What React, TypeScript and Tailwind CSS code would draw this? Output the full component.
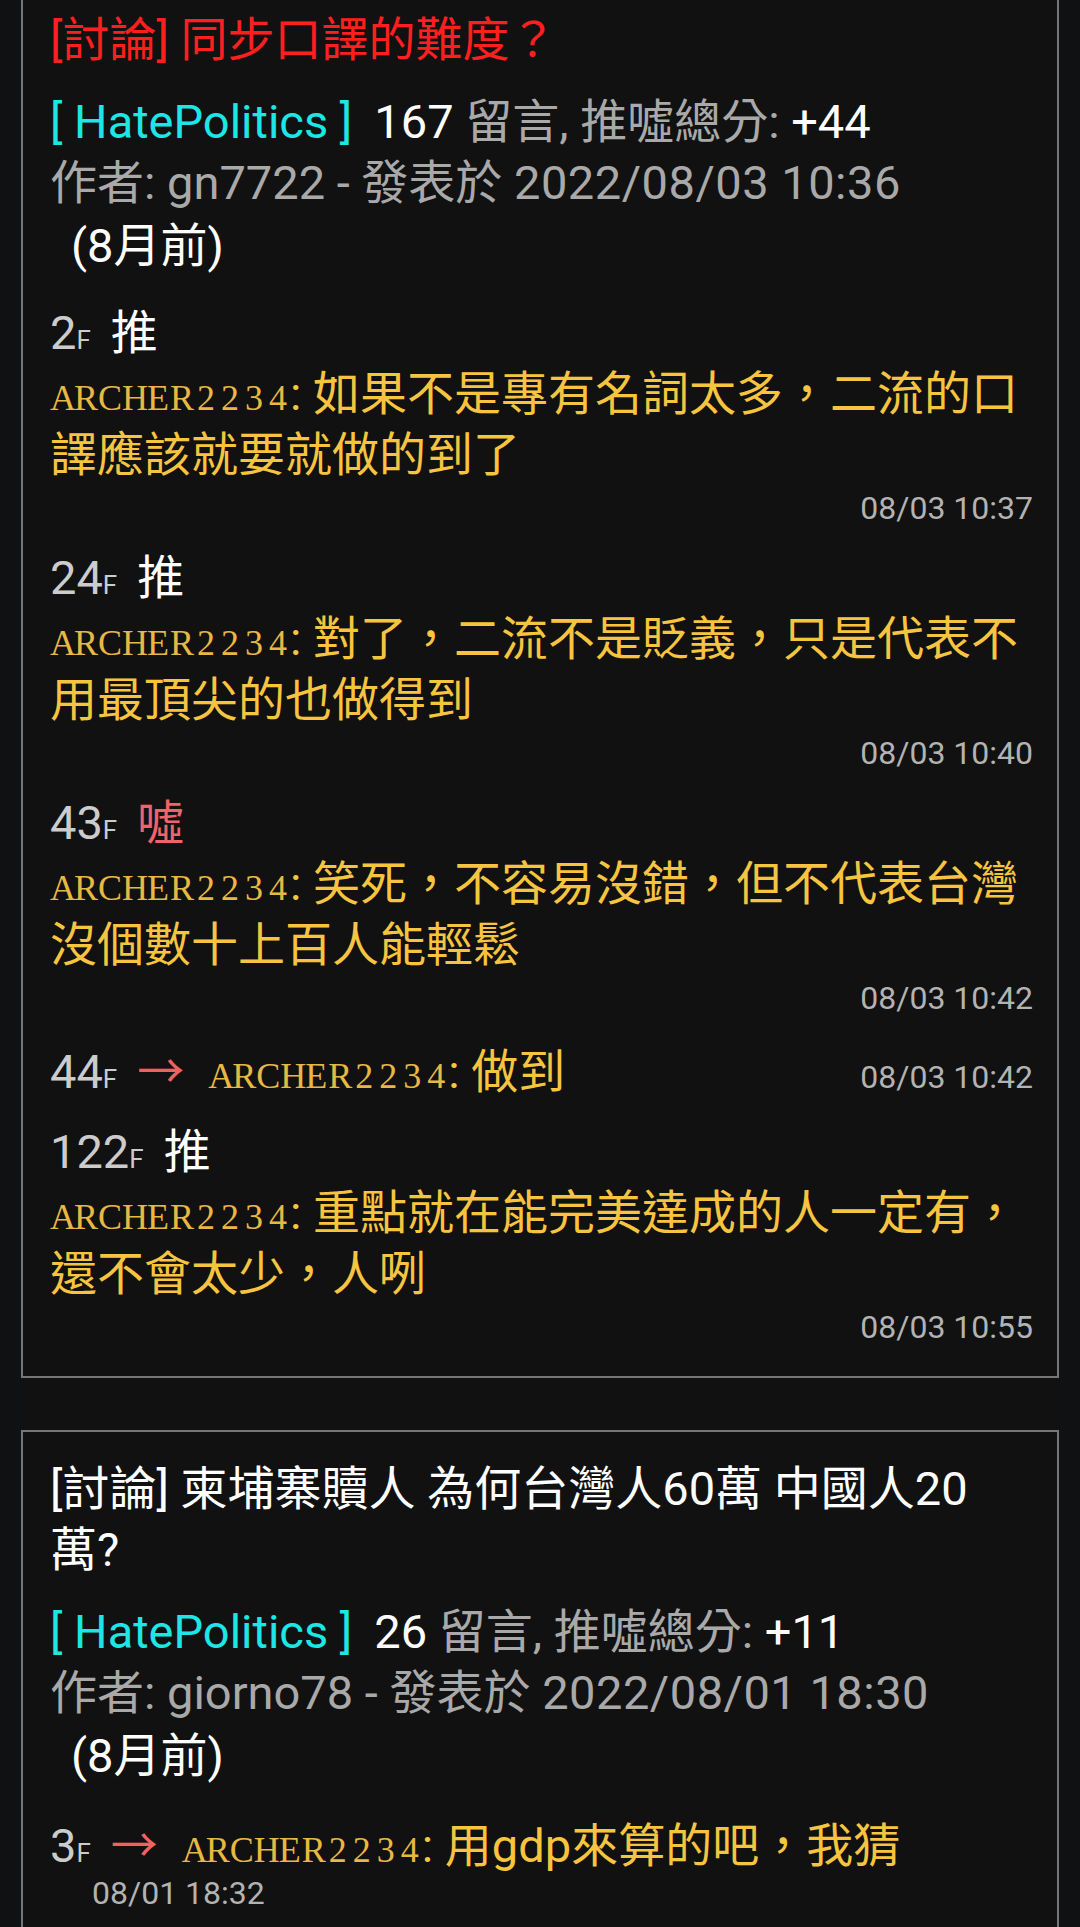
import { FC, ReactNode } from "react";

const Mono: FC<{ text: string }> = ({ text }) => (
	<span className="text-[#e8b844] font-['Liberation_Serif',serif] text-[36px] leading-[30px]">
		{text.split("").map((ch, i) => (
			<span key={i} className="inline-block w-[24px] text-center leading-[30px]">
				{ch}
			</span>
		))}
	</span>
);

const Floor: FC<{ n: string }> = ({ n }) => (
	<span className="text-[#cccccc]">
		{n}
		<span className="text-[26px] leading-[20px]">F</span>
	</span>
);

const Time: FC<{ children: ReactNode; className?: string }> = ({ children, className = "" }) => (
	<div className={`text-[32px] leading-[46px] text-[#b3b3b3] ${className}`}>{children}</div>
);

const PushComment: FC<{ floor: string; tag: string; lines: string[]; time: string; first?: boolean }> = ({
	floor,
	tag,
	lines,
	time,
	first,
}) => (
	<div className={first ? "" : "mt-[16px]"}>
		<div>
			<Floor n={floor} />
			<span className={`ml-[20px] ${tag === "噓" ? "text-[#f0626c]" : "text-white"}`}>{tag}</span>
		</div>
		<div className="text-[#f7c440]">
			<Mono text="ARCHER2234" />
			<span>: </span>
			{lines.map((l, i) => (
				<span key={i}>
					{i > 0 && <br />}
					{l}
				</span>
			))}
		</div>
		<Time className="text-right">{time}</Time>
	</div>
);

const ArrowHead: FC<{ floor: string; text: string }> = ({ floor, text }) => (
	<div className="whitespace-nowrap">
		<Floor n={floor} />
		<span className="ml-[20px] text-[#f06262]">→</span>
		<span className="ml-[24px]">
			<Mono text="ARCHER2234" />
		</span>
		<span className="text-[#f7c440]">: {text}</span>
	</div>
);

const Header: FC<{ title: ReactNode; titleColor: string; count: string; score: string; author: string; date: string }> = ({
	title,
	titleColor,
	count,
	score,
	author,
	date,
}) => (
	<>
		<div className={titleColor}>{title}</div>
		<div className="mt-[21px]">
			<span className="text-[#1de6e6]">[ HatePolitics ]</span>
			<span className="ml-[22px] text-white">{count}</span>
			<span className="text-[#a9a9a9]"> 留言, 推噓總分: </span>
			<span className="text-white">{score}</span>
		</div>
		<div className="text-[#a9a9a9]">
			作者: {author} - 發表於 <span className="tracking-[0.5px]">{date}</span>
		</div>
		<div className="mt-[2px] pl-[21px] text-white">(8月前)</div>
	</>
);

const Card: FC<{ children: ReactNode; className?: string }> = ({ children, className = "" }) => (
	<div className={`border-2 border-[#777777] bg-[#111111] pl-[27px] pr-[24px] pt-[26px] pb-[26px] ${className}`}>
		{children}
	</div>
);

export default function App() {
	return (
		<div className="min-h-screen overflow-hidden bg-[#0f1113] font-['Roboto','Noto_Sans_CJK_TC',sans-serif] text-[47px] leading-[61px]">
			<div className="mx-[21px] -mt-[19px] bg-[#111111]">
				<Card>
					<Header
						title="[討論] 同步口譯的難度？"
						titleColor="text-[#ff1f1f]"
						count="167"
						score="+44"
						author="gn7722"
						date="2022/08/03 10:36"
					/>
					<div className="mt-[26px]">
						<PushComment
							first
							floor="2"
							tag="推"
							lines={["如果不是專有名詞太多，二流的口", "譯應該就要就做的到了"]}
							time="08/03 10:37"
						/>
						<PushComment
							floor="24"
							tag="推"
							lines={["對了，二流不是貶義，只是代表不", "用最頂尖的也做得到"]}
							time="08/03 10:40"
						/>
						<PushComment
							floor="43"
							tag="噓"
							lines={["笑死，不容易沒錯，但不代表台灣", "沒個數十上百人能輕鬆"]}
							time="08/03 10:42"
						/>
						<div className="mt-[16px] flex items-baseline justify-between pt-[4px] pb-[3px]">
							<ArrowHead floor="44" text="做到" />
							<Time>08/03 10:42</Time>
						</div>
						<PushComment
							floor="122"
							tag="推"
							lines={["重點就在能完美達成的人一定有，", "還不會太少，人咧"]}
							time="08/03 10:55"
						/>
					</div>
				</Card>
				<Card className="mt-[52px] pb-[120px]">
					<Header
						title={
							<>
								[討論] 柬埔寨贖人 為何台灣人60萬 中國人20
								<br />
								萬?
							</>
						}
						titleColor="text-white"
						count="26"
						score="+11"
						author="giorno78"
						date="2022/08/01 18:30"
					/>
					<div className="mt-[26px]">
						<div className="pt-[3px]">
							<ArrowHead floor="3" text="用gdp來算的吧，我猜" />
						</div>
						<Time className="-mt-[6px] ml-[42px]">08/01 18:32</Time>
					</div>
				</Card>
			</div>
		</div>
	);
}
